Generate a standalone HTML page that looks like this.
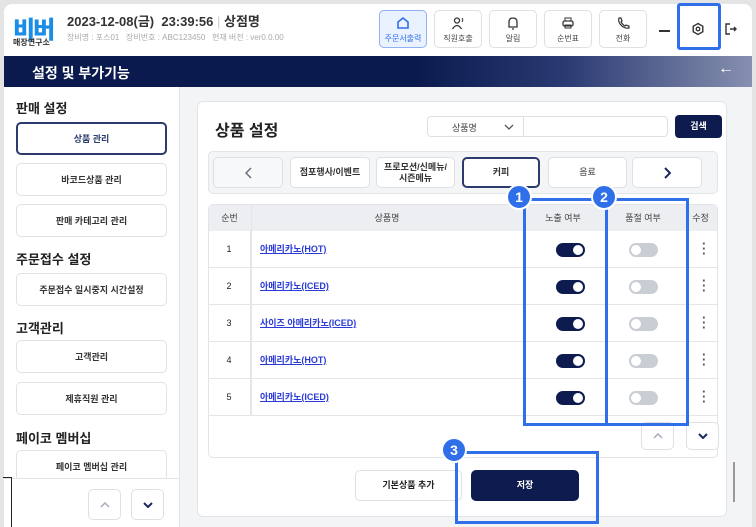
<!DOCTYPE html>
<html><head><meta charset="utf-8"><style>
*{box-sizing:border-box;margin:0;padding:0}
body{width:756px;height:527px;overflow:hidden;background:#e4e4e4;font-family:"Liberation Sans","Noto Sans CJK KR",sans-serif;position:relative;color:#222}
.a{position:absolute}
.frame{left:4px;top:4px;width:748px;height:523px;background:#fff;border-radius:8px 8px 0 0;overflow:hidden}
.hb{position:absolute;top:10px;width:48px;height:38px;border:1px solid #dde0e5;border-radius:5px;background:#fff;font-size:8px;color:#444;text-align:center}
.hb svg{display:block;margin:5px auto 3px}
.sb{position:absolute;left:16px;width:151px;height:33px;border:1px solid #dfe2e7;border-radius:5px;background:#fff;font-size:9px;font-weight:bold;color:#333;display:flex;align-items:center;justify-content:center}
.sh{position:absolute;left:16px;font-size:13px;font-weight:bold;color:#222}
.tab{position:absolute;top:157px;height:31px;border:1px solid #dde0e5;border-radius:5px;background:#fff;font-size:9px;font-weight:bold;color:#333;display:flex;align-items:center;justify-content:center;text-align:center;line-height:11px}
.row{position:absolute;left:208px;width:510px;height:37px;border-bottom:1px solid #e4e6ea;font-size:9px}
.row .n{position:absolute;left:0;width:43px;top:0;height:36px;line-height:36px;text-align:center;border-right:1px solid #e4e6ea}
.row .p{position:absolute;left:52px;top:0;line-height:36px;color:#2a3bd6;text-decoration:underline;font-weight:bold}
.on,.off{position:absolute;top:12px;width:29px;height:14px;border-radius:7px}
.on{left:348px;background:#0d1b4f}.on::after{content:"";position:absolute;right:2px;top:2px;width:10px;height:10px;border-radius:50%;background:#fff}
.off{left:421px;background:#c9cdd4}.off::after{content:"";position:absolute;left:2px;top:2px;width:10px;height:10px;border-radius:50%;background:#fff}
.dots{position:absolute;left:494px;top:10px;font-size:13px;color:#555;line-height:5px;font-weight:bold}
.blue{position:absolute;border:3px solid #2f6fea}
.circ{position:absolute;width:26px;height:26px;border-radius:50%;background:#2f6fea;color:#fff;font-weight:bold;font-size:14px;text-align:center;line-height:22px;border:2px solid #fff}
.sq{position:absolute;width:33px;height:28px;border:1px solid #dde0e5;border-radius:5px;background:#fff;display:flex;align-items:center;justify-content:center}
</style></head><body>
<div class="a frame"></div>
<div class="a" style="left:13px;top:10px;font-size:24px;font-weight:900;color:#1a8de6;letter-spacing:-2px">비버</div>
<div class="a" style="left:13px;top:37px;font-size:8px;color:#333;font-weight:bold">매장연구소</div>
<div class="a" style="left:67px;top:11px;font-size:13px;font-weight:bold;color:#333">2023-12-08(금)&nbsp; 23:39:56 <span style="color:#ccc;font-weight:normal">|</span> 상점명</div>
<div class="a" style="left:67px;top:32px;font-size:8px;color:#aaa">장비명 : 포스01 &nbsp; 장비번호 : ABC123450 &nbsp; 현재 버전 : ver0.0.00</div>
<div class="hb" style="left:379px;background:#eaf1ff;border-color:#8fb1f5;color:#2f6fea"><svg width="14" height="14" viewBox="0 0 14 14"><path d="M2 6 L7 2 L12 6 V12 H2Z" fill="none" stroke="#2f6fea" stroke-width="1.6"/></svg>주문서출력</div>
<div class="hb" style="left:434px"><svg width="14" height="14" viewBox="0 0 14 14"><circle cx="6" cy="4.5" r="2.5" fill="none" stroke="#333" stroke-width="1.3"/><path d="M1.5 13 Q6 6 10.5 13" fill="none" stroke="#333" stroke-width="1.3"/><path d="M11 2 Q12.5 4 11 6" fill="none" stroke="#333"/></svg>직원호출</div>
<div class="hb" style="left:489px"><svg width="14" height="14" viewBox="0 0 14 14"><path d="M3 11 V6 Q3 2 7 2 Q11 2 11 6 V11 H3Z M6 13 H8" fill="none" stroke="#333" stroke-width="1.3"/></svg>알림</div>
<div class="hb" style="left:544px"><svg width="14" height="14" viewBox="0 0 14 14"><rect x="2" y="5" width="10" height="5" rx="1.5" fill="none" stroke="#333" stroke-width="1.3"/><rect x="4" y="2" width="6" height="3" fill="none" stroke="#333"/><rect x="4" y="9" width="6" height="3" fill="none" stroke="#333"/></svg>순번표</div>
<div class="hb" style="left:599px"><svg width="14" height="14" viewBox="0 0 14 14"><path d="M3 2 L5 2 L6 5 L5 6 Q7 9 9 10 L10 9 L13 10 L13 12 Q8 13 4 8 Q2 5 3 2Z" fill="none" stroke="#333" stroke-width="1.2"/></svg>전화</div>
<div class="a" style="left:659px;top:30px;width:11px;height:2px;background:#333"></div>
<svg class="a" style="left:691px;top:22px" width="14" height="14" viewBox="0 0 14 14"><path d="M7 1.5 L11.8 4.25 V9.75 L7 12.5 L2.2 9.75 V4.25Z" fill="none" stroke="#333" stroke-width="1.4"/><circle cx="7" cy="7" r="1.8" fill="none" stroke="#333" stroke-width="1.3"/></svg>
<div class="blue" style="left:677px;top:3px;width:44px;height:47px;border-radius:3px"></div>
<svg class="a" style="left:724px;top:23px" width="14" height="12" viewBox="0 0 14 12"><path d="M6 1 H2 V11 H6" fill="none" stroke="#333" stroke-width="1.4"/><path d="M6 6 H12 M10 4 L12 6 L10 8" fill="none" stroke="#333" stroke-width="1.4"/></svg>
<div class="a" style="left:4px;top:56px;width:748px;height:31px;background:linear-gradient(90deg,#0b1a4e 0%,#0b1a4e 55%,#2a3a72 75%,#8790b0 100%)"></div>
<div class="a" style="left:32px;top:63px;color:#fff;font-size:14px;font-weight:bold">설정 및 부가기능</div>
<div class="a" style="left:718px;top:60px;color:#fff;font-size:16px">←</div>
<div class="a" style="left:179px;top:87px;width:573px;height:440px;background:#f3f4f6;border-left:1px solid #e2e4e8"></div>
<div class="sh" style="top:98px">판매 설정</div>
<div class="sb" style="top:122px;border:2px solid #2c3a6e;color:#2c3a6e">상품 관리</div>
<div class="sb" style="top:163px">바코드상품 관리</div>
<div class="sb" style="top:204px">판매 카테고리 관리</div>
<div class="sh" style="top:249px">주문접수 설정</div>
<div class="sb" style="top:273px">주문접수 일시중지 시간설정</div>
<div class="sh" style="top:318px">고객관리</div>
<div class="sb" style="top:340px">고객관리</div>
<div class="sb" style="top:382px">제휴직원 관리</div>
<div class="sh" style="top:428px">페이코 멤버십</div>
<div class="sb" style="top:450px">페이코 멤버십 관리</div>
<div class="a" style="left:4px;top:478px;width:175px;height:49px;background:#fff;border-top:1px solid #e2e4e8"></div>
<div class="a" style="left:3px;top:477px;width:9px;height:50px;border-top:1px solid #222;border-right:1px solid #222"></div>
<div class="sq" style="left:88px;top:489px;height:31px"><svg width="10" height="6"><path d="M1 5 L5 1 L9 5" fill="none" stroke="#aab" stroke-width="1.5"/></svg></div>
<div class="sq" style="left:131px;top:489px;height:31px"><svg width="10" height="6"><path d="M1 1 L5 5 L9 1" fill="none" stroke="#1b2a5e" stroke-width="2"/></svg></div>
<div class="a" style="left:197px;top:101px;width:530px;height:416px;background:#fff;border:1px solid #e2e4e8;border-radius:6px"></div>
<div class="a" style="left:215px;top:117px;font-size:16px;font-weight:bold">상품 설정</div>
<div class="a" style="left:427px;top:116px;width:241px;height:21px;border:1px solid #dde0e5;border-radius:4px"></div>
<div class="a" style="left:523px;top:116px;width:1px;height:21px;background:#dde0e5"></div>
<div class="a" style="left:452px;top:121px;font-size:9px;color:#444">상품명</div>
<svg class="a" style="left:504px;top:124px" width="10" height="6"><path d="M1 1 L5 5 L9 1" fill="none" stroke="#555" stroke-width="1.3"/></svg>
<div class="a" style="left:675px;top:115px;width:47px;height:23px;background:#0d1b4f;border-radius:4px;color:#fff;font-size:9px;font-weight:bold;text-align:center;line-height:23px">검색</div>
<div class="a" style="left:208px;top:151px;width:510px;height:43px;background:#f4f5f7;border:1px solid #e2e4e8;border-radius:5px"></div>
<div class="tab" style="left:213px;width:70px;background:#f7f8fa"><svg width="7" height="12"><path d="M6 1 L1 6 L6 11" fill="none" stroke="#667" stroke-width="1.4"/></svg></div>
<div class="tab" style="left:290px;width:80px">점포행사/이벤트</div>
<div class="tab" style="left:376px;width:79px">프로모션/신메뉴/<br>시즌메뉴</div>
<div class="tab" style="left:462px;width:78px;border:2px solid #2c3a6e">커피</div>
<div class="tab" style="left:548px;width:79px;font-weight:normal">음료</div>
<div class="tab" style="left:632px;width:70px"><svg width="7" height="12"><path d="M1 1 L6 6 L1 11" fill="none" stroke="#1b2a5e" stroke-width="2"/></svg></div>
<div class="a" style="left:208px;top:204px;width:510px;height:254px;border:1px solid #e2e4e8;border-radius:5px;background:#fff"></div>
<div class="a" style="left:209px;top:205px;width:508px;height:26px;background:#eceef1"></div>
<div class="a" style="left:208px;top:211px;width:43px;text-align:center;font-size:9px;color:#444">순번</div>
<div class="a" style="left:251px;top:211px;width:272px;text-align:center;font-size:9px;color:#444">상품명</div>
<div class="a" style="left:523px;top:211px;width:80px;text-align:center;font-size:9px;color:#444">노출 여부</div>
<div class="a" style="left:603px;top:211px;width:80px;text-align:center;font-size:9px;color:#444">품절 여부</div>
<div class="a" style="left:683px;top:211px;width:35px;text-align:center;font-size:9px;color:#444">수정</div>
<div class="a" style="left:251px;top:205px;width:1px;height:211px;background:#e4e6ea"></div>
<div class="row" style="top:231px"><div class="n">1</div><div class="p">아메리카노(HOT)</div><div class="on"></div><div class="off"></div><div class="dots">·<br>·<br>·</div></div>
<div class="row" style="top:268px"><div class="n">2</div><div class="p">아메리카노(ICED)</div><div class="on"></div><div class="off"></div><div class="dots">·<br>·<br>·</div></div>
<div class="row" style="top:305px"><div class="n">3</div><div class="p">사이즈 아메리카노(ICED)</div><div class="on"></div><div class="off"></div><div class="dots">·<br>·<br>·</div></div>
<div class="row" style="top:342px"><div class="n">4</div><div class="p">아메리카노(HOT)</div><div class="on"></div><div class="off"></div><div class="dots">·<br>·<br>·</div></div>
<div class="row" style="top:379px"><div class="n">5</div><div class="p">아메리카노(ICED)</div><div class="on"></div><div class="off"></div><div class="dots">·<br>·<br>·</div></div>
<div class="sq" style="left:641px;top:422px"><svg width="10" height="6"><path d="M1 5 L5 1 L9 5" fill="none" stroke="#aab" stroke-width="1.5"/></svg></div>
<div class="sq" style="left:686px;top:422px"><svg width="10" height="6"><path d="M1 1 L5 5 L9 1" fill="none" stroke="#1b2a5e" stroke-width="2"/></svg></div>
<div class="a" style="left:355px;top:470px;width:107px;height:31px;border:1px solid #dde0e5;border-radius:5px;background:#fff;font-size:9px;font-weight:bold;text-align:center;line-height:29px">기본상품 추가</div>
<div class="a" style="left:471px;top:470px;width:108px;height:31px;background:#0d1b4f;border-radius:5px;color:#fff;font-size:9px;font-weight:bold;text-align:center;line-height:31px">저장</div>
<div class="a" style="left:733px;top:462px;width:2px;height:40px;background:#999"></div>
<div class="blue" style="left:523px;top:198px;width:85px;height:228px"></div>
<div class="blue" style="left:605px;top:198px;width:84px;height:228px"></div>
<div class="blue" style="left:455px;top:451px;width:144px;height:73px"></div>
<div class="circ" style="left:506px;top:184px">1</div>
<div class="circ" style="left:591px;top:184px">2</div>
<div class="circ" style="left:441px;top:437px">3</div>
</body></html>
